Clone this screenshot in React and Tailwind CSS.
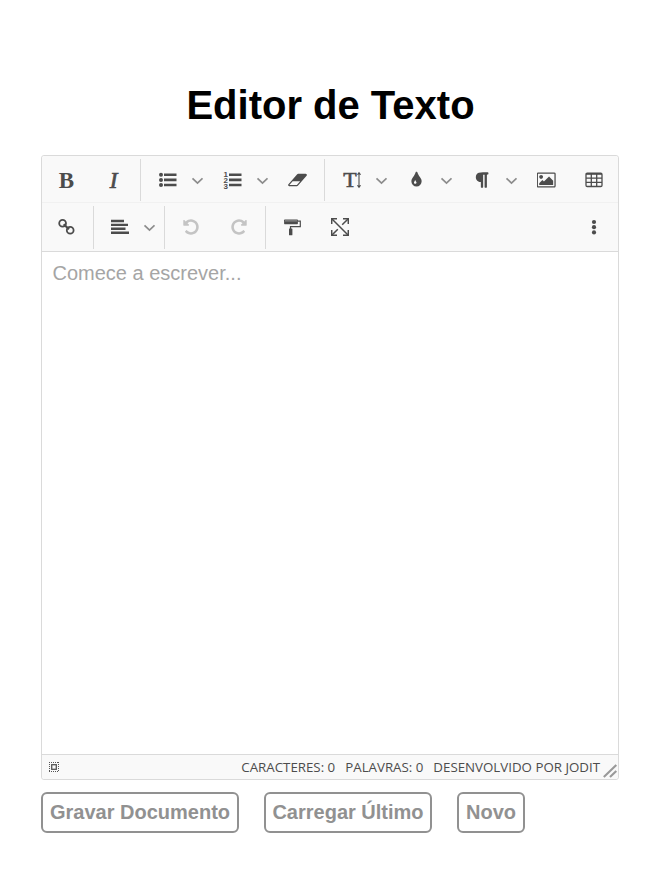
import React from "react";

function Button({ children, muted = false, className = "w-12" }) {
  return (
    <div
      className={`flex h-full shrink-0 items-center justify-center ${
        muted ? "text-[#c4c4c4]" : "text-[#4c4c4c]"
      } ${className}`}
    >
      {children}
    </div>
  );
}

function Chevron() {
  return (
    <div className="flex h-full w-[17px] shrink-0 items-center pt-0.5">
      <svg width="12" height="8" viewBox="0 0 12 8" className="-ml-px block" fill="none">
        <path d="M1.500 1.300 6.500 6 11.500 1.300" stroke="#8c8c8c" strokeWidth="1.700" />
      </svg>
    </div>
  );
}

function Separator({ className }) {
  return <div className={`w-px shrink-0 bg-[#dadada] ${className}`} />;
}

function Glyph({ d, box = "0 0 1792 1792", width = 18, height = 18, className = "" }) {
  return (
    <svg width={width} height={height} viewBox={box} fill="currentColor" className={`block ${className}`}>
      <path d={d} />
    </svg>
  );
}

const eraser =
  "M960 1408l336-384h-768l-336 384h768zm1013-1077q15 34 9.5 71.5t-30.5 65.5l-896 1024q-38 44-96 44h-768q-38 0-69.5-20.5t-47.5-54.5q-15-34-9.5-71.5t30.5-65.5l896-1024q38-44 96-44h768q38 0 69.5 20.5t47.5 54.5z";
const drop =
  "M896 1152q0-36-20-69-1-1-15.5-22.5t-25.5-38-25-44-21-50.5q-4-16-21-16t-21 16q-7 23-21 50.5t-25 44-25.5 38-15.5 22.5q-20 33-20 69 0 53 37.5 90.5t90.5 37.5 90.5-37.5 37.5-90.5zm512-128q0 212-150 362t-362 150-362-150-150-362q0-145 81-275 6-9 62.5-90.5t101-151 99.5-178 83-201.5q9-30 34-47t51-17 51.5 17 33.5 47q28 93 83 201.5t99.5 178 101 151 62.5 90.5q81 127 81 275z";
const paragraph =
  "M1534 189v73q0 29-18.5 61t-42.5 32q-50 0-54 1-26 6-32 31-3 11-3 64v1152q0 25-18 43t-43 18h-108q-25 0-43-18t-18-43v-1218h-143v1218q0 25-17.5 43t-43.5 18h-108q-26 0-43.5-18t-17.5-43v-496q-147-12-245-59-126-58-192-179-64-117-64-259 0-166 88-286 88-118 209-159 111-37 417-37h479q25 0 43 18t18 43z";
const image =
  "M576 576q0 80-56 136t-136 56-136-56-56-136 56-136 136-56 136 56 56 136zm1024 384v448h-1408v-192l320-320 160 160 512-512zm96-704h-1600q-13 0-22.5 9.5t-9.5 22.5v1216q0 13 9.5 22.5t22.5 9.5h1600q13 0 22.5-9.5t9.5-22.5v-1216q0-13-9.5-22.5t-22.5-9.5zm160 32v1216q0 66-47 113t-113 47h-1600q-66 0-113-47t-47-113v-1216q0-66 47-113t113-47h1600q66 0 113 47t47 113z";
const redo =
  "M1664 256v448q0 26-19 45t-45 19h-448q-42 0-59-40-17-39 14-69l138-138q-148-137-349-137-104 0-198.5 40.5t-163.5 109.5-109.5 163.5-40.5 198.5 40.5 198.5 109.5 163.5 163.5 109.5 198.5 40.5q119 0 225-52t179-147q7-10 23-12 15 0 25 9l137 138q9 8 9.5 20.5t-7.5 22.5q-109 132-264 204.5t-327 72.5q-156 0-298-61t-245-164-164-245-61-298 61-298 164-245 245-164 298-61q147 0 284.5 55.5t244.5 156.5l130-129q29-31 70-14 39 17 39 59z";

function BulletList() {
  return (
    <svg width="18" height="18" viewBox="0 0 18 18" fill="currentColor">
      <circle cx="2" cy="3.700" r="2" />
      <circle cx="2" cy="8.900" r="2" />
      <circle cx="2" cy="14" r="2" />
      <path d="M5 2.400h12.500v2.600H5zM5 7.600h12.500v2.600H5zM5 12.700h12.500v2.600H5z" />
    </svg>
  );
}

function NumberList() {
  return (
    <svg width="18" height="20" viewBox="0 0 18 20" fill="currentColor" className="overflow-visible">
      <g fontFamily="Liberation Sans, sans-serif" fontWeight="700" fontSize="8">
        <text x="-0.500" y="6.500">1</text>
        <text x="-0.500" y="12.800">2</text>
        <text x="-0.500" y="19">3</text>
      </g>
      <path d="M5 3.400h12.500v2.600H5zM5 8.600h12.500v2.600H5zM5 13.700h12.500v2.600H5z" />
    </svg>
  );
}

function TableIcon() {
  return (
    <svg width="18" height="16" viewBox="0 0 18 16" fill="none" stroke="currentColor">
      <rect x="1" y="1.200" width="16" height="13.300" rx="1.200" strokeWidth="1.300" />
      <path d="M1 1.900h16" strokeWidth="1.800" />
      <path d="M1 6.200h16M1 10.400h16M6.300 2v12.500M11.700 2v12.500" strokeWidth="1.300" />
    </svg>
  );
}

function LinkIcon() {
  return (
    <svg width="18" height="18" viewBox="0 0 18 18" fill="none" stroke="currentColor" strokeWidth="1.800">
      <circle cx="5.600" cy="5.300" r="3.400" />
      <circle cx="13.200" cy="12.300" r="3.400" />
      <path d="M6.700 6.300 12 11.300" strokeWidth="2.200" />
    </svg>
  );
}

function AlignIcon() {
  return (
    <svg width="18" height="16" viewBox="0 0 18 16" fill="currentColor">
      <path d="M0 .800h13v2.400H0zM0 4.700h17v2.400H0zM0 8.600h14.500v2.400H0zM0 12.500h18v2.400H0z" />
    </svg>
  );
}

function RollerIcon() {
  return (
    <svg width="18" height="18" viewBox="0 0 18 18" className="translate-x-[0.5px]">
      <rect x="0.600" y="1.600" width="13.800" height="4.600" rx="0.600" fill="currentColor" />
      <path d="M1.500 2.900h12" stroke="#999" strokeWidth="1" />
      <path d="M14.500 3.200h2.300v5.500H7v3" fill="none" stroke="currentColor" strokeWidth="1.200" />
      <rect x="5.500" y="10.500" width="3.400" height="6.700" rx="0.500" fill="currentColor" />
    </svg>
  );
}

function FullscreenIcon() {
  return (
    <svg width="18" height="18" viewBox="0 0 18 18" fill="none" stroke="currentColor" strokeWidth="1.500">
      <path d="M.7 6V.7H6M12 .7h5.300V6M17.300 12v5.300H12M6 17.300H.7V12" />
      <path d="M1 1l16 16M17 1l-5.800 5.800M1 17l5.800-5.800" />
    </svg>
  );
}

function FontSizeIcon() {
  return (
    <div className="flex h-[18px] items-center">
      <span className="font-['Liberation_Serif',serif] text-[22px] leading-[18px] [-webkit-text-stroke:0.6px_currentColor]">
        T
      </span>
      <svg width="4" height="18" viewBox="0 0 4 18" fill="none" stroke="currentColor">
        <path d="M2 2v14M.4 3.800 2 1.600 3.600 3.800M.4 14.200 2 16.400 3.600 14.200" strokeWidth="1.100" />
      </svg>
    </div>
  );
}

function SelectAllIcon() {
  return (
    <svg width="10" height="10" viewBox="0 0 10 10" fill="none" stroke="#555">
      <path d="M0 .5h10M0 9.500h10M.5 0v10M9.500 0v10" strokeDasharray="1 1" strokeWidth="1" />
      <rect x="2.700" y="2.700" width="4.600" height="4.600" strokeWidth="1.300" />
    </svg>
  );
}

function ActionButton({ children, className }) {
  return (
    <button
      className={`h-[41px] shrink-0 rounded-md border-2 border-[#919191] bg-white pb-0.5 text-center text-[20px] font-bold whitespace-nowrap text-[#919191] ${className}`}
    >
      {children}
    </button>
  );
}

export default function App() {
  return (
    <main className="h-[883px] w-[658px] overflow-hidden bg-white pl-[41px] font-['Liberation_Sans',Arial,sans-serif]">
      <h1 className="w-[579px] pt-[82px] text-center text-[40px] leading-[46px] font-bold text-black">
        Editor de Texto
      </h1>

      <section className="mt-[27px] flex h-[625px] w-[578px] flex-col rounded-[3px] border border-[#dadada] bg-white">
        <div className="shrink-0 rounded-t-[3px] border-b border-[#dadada] bg-[#f9f9f9]">
          <div className="flex h-[47px] border-b border-[#f1f1f1] pt-0.5">
            <Button>
              <span className="pl-px font-['Liberation_Serif',serif] text-[23px] leading-none font-bold">B</span>
            </Button>
            <Button>
              <span className="pr-px font-['Liberation_Serif',serif] text-[23px] leading-none italic [-webkit-text-stroke:0.7px_currentColor]">
                I
              </span>
            </Button>
            <Separator className="mt-px mr-[3px] mb-px ml-0.5" />
            <Button><BulletList /></Button>
            <Chevron />
            <Button><NumberList /></Button>
            <Chevron />
            <Button><Glyph d={eraser} box="0 0 2048 1792" width={20} className="-translate-x-[0.5px]" /></Button>
            <Separator className="mt-px mr-[3px] mb-px ml-0.5" />
            <Button><FontSizeIcon /></Button>
            <Chevron />
            <Button><Glyph d={drop} className="-translate-x-[0.5px]" /></Button>
            <Chevron />
            <Button><Glyph d={paragraph} /></Button>
            <Chevron />
            <Button className="w-[47px]"><Glyph d={image} box="-32 0 1920 1792" width={19} /></Button>
            <Button><TableIcon /></Button>
          </div>
          <div className="flex h-12">
            <Button><LinkIcon /></Button>
            <Separator className="mt-[3px] mr-0.5 mb-0.5 ml-[3px]" />
            <Button><AlignIcon /></Button>
            <Chevron />
            <Separator className="mt-[3px] mr-0.5 mb-0.5 ml-[3px]" />
            <Button muted><Glyph d={redo} className="-scale-x-100" /></Button>
            <Button muted><Glyph d={redo} /></Button>
            <Separator className="mt-[3px] mr-0.5 mb-0.5 ml-0.5" />
            <Button><RollerIcon /></Button>
            <Button><FullscreenIcon /></Button>
            <Button className="ml-auto w-12">
              <svg width="6" height="16" viewBox="0 0 6 16" fill="currentColor">
                <circle cx="3" cy="3" r="2.100" />
                <circle cx="3" cy="8.200" r="2.100" />
                <circle cx="3" cy="13.400" r="2.100" />
              </svg>
            </Button>
          </div>
        </div>

        <div className="flex-1 pt-[9px] pl-[10.500px] text-[20px] leading-6 text-[#a5a5a5]">Comece a escrever...</div>

        <footer className="relative flex h-[25px] shrink-0 items-center rounded-b-[3px] border-t border-[#dadada] bg-[#f9f9f9] pl-[7px] font-['Open_Sans','Noto_Sans',sans-serif] text-[13.300px] text-[#4c4c4c]">
          <SelectAllIcon />
          <div className="ml-auto flex gap-2.5 pr-[18px] leading-[23px] whitespace-nowrap">
            <span>CARACTERES: 0</span>
            <span>PALAVRAS: 0</span>
            <span>DESENVOLVIDO POR JODIT</span>
          </div>
          <svg className="absolute right-0 bottom-0" width="16" height="16" viewBox="0 0 16 16" stroke="#999" strokeWidth="2.100">
            <path d="M1.800 14 14.300 2M8 14l6.300-6" />
          </svg>
        </footer>
      </section>

      <div className="mt-3 flex gap-[25px]">
        <ActionButton className="w-[198px]">Gravar Documento</ActionButton>
        <ActionButton className="w-[168px]">Carregar Último</ActionButton>
        <ActionButton className="w-[68px]">Novo</ActionButton>
      </div>
    </main>
  );
}
